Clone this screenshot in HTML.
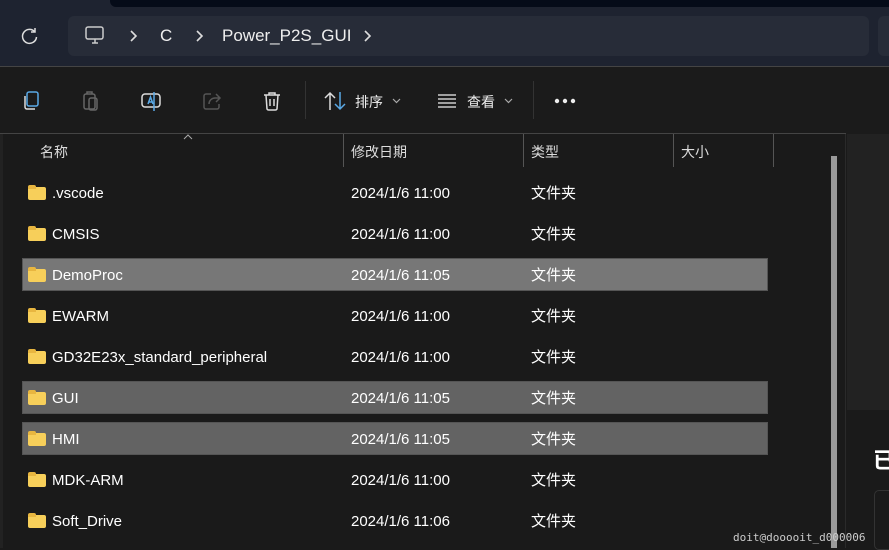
<!DOCTYPE html>
<html><head><meta charset="utf-8"><style>
*{margin:0;padding:0;box-sizing:border-box}
body{width:889px;height:548px;overflow:hidden;background:#1a1a1a;font-family:"Liberation Sans","Noto Sans CJK SC",sans-serif;color:#fff;position:relative}
.a{position:absolute}
.row{position:absolute;left:22px;width:746px;height:33px;font-size:15px;color:#fff}
.row span{position:absolute;top:1px;line-height:33px;height:33px}
.fold{position:absolute;left:6px;top:11px;width:18px;height:13px;background:#f7cf5a;border-radius:2px}
.fold:before{content:"";position:absolute;left:0;top:-2px;width:8px;height:4px;background:#e8b640;border-radius:2px 2px 0 0}
.hd{position:absolute;top:136px;line-height:33px;font-size:14px;color:#ddd}
.vl{position:absolute;top:134px;width:1px;height:33px;background:#555}
.sel{box-shadow:inset 0 0 0 1px #555}
</style></head><body>
<div class="a" style="left:0;top:0;width:889px;height:66px;background:#1e2330"></div>
<div class="a" style="left:110px;top:0;width:779px;height:7px;background:#050b18;border-radius:0 0 0 6px"></div>
<div class="a" style="left:68px;top:16px;width:801px;height:40px;background:#272c38;border-radius:6px"></div>
<div class="a" style="left:878px;top:16px;width:20px;height:40px;background:#272c38;border-radius:6px"></div>
<svg class="a" style="left:20px;top:26px" width="20" height="20" viewBox="0 0 20 20" fill="none" stroke="#ddd" stroke-width="1.5"><path d="M15 6A7 7 0 1 0 16.5 11"/><path d="M15 2v4h-4"/></svg>
<svg class="a" style="left:84px;top:24px" width="22" height="22" viewBox="0 0 22 22" fill="none" stroke="#ccc" stroke-width="1.5"><rect x="2" y="3" width="17" height="12" rx="2"/><path d="M8 19h6M11 15v4"/></svg>
<svg class="a" style="left:128px;top:30px" width="10" height="12" viewBox="0 0 10 12" fill="none" stroke="#ddd" stroke-width="1.6"><path d="M3 1l5 5-5 5"/></svg>
<div class="a" style="left:160px;top:26px;font-size:17px;color:#eee">C</div>
<svg class="a" style="left:194px;top:30px" width="10" height="12" viewBox="0 0 10 12" fill="none" stroke="#ddd" stroke-width="1.6"><path d="M3 1l5 5-5 5"/></svg>
<div class="a" style="left:222px;top:26px;font-size:17px;color:#eee">Power_P2S_GUI</div>
<svg class="a" style="left:362px;top:30px" width="10" height="12" viewBox="0 0 10 12" fill="none" stroke="#ddd" stroke-width="1.6"><path d="M3 1l5 5-5 5"/></svg>
<div class="a" style="left:0;top:66px;width:889px;height:1px;background:#444"></div>
<div class="a" style="left:0;top:67px;width:889px;height:67px;background:#1b1b1b"></div>
<svg class="a" style="left:20px;top:90px" width="22" height="22" viewBox="0 0 22 22" fill="none" stroke-width="1.5"><rect x="7" y="2" width="11" height="14" rx="2" stroke="#5aa9e6"/><path d="M5 6v11a2 2 0 0 0 2 2h8" stroke="#ddd"/></svg>
<svg class="a" style="left:80px;top:90px" width="22" height="22" viewBox="0 0 22 22" fill="none" stroke="#666" stroke-width="1.5"><rect x="4" y="4" width="11" height="15" rx="2"/><rect x="9" y="8" width="8" height="12" rx="2"/><path d="M7 4V2h5v2"/></svg>
<svg class="a" style="left:140px;top:90px" width="22" height="22" viewBox="0 0 22 22" fill="none" stroke-width="1.5"><rect x="2" y="4" width="18" height="13" rx="3" stroke="#ddd"/><path d="M8 14l2.5-7 2.5 7M9 12h3" stroke="#5aa9e6"/><path d="M14 2v19" stroke="#5aa9e6"/></svg>
<svg class="a" style="left:201px;top:90px" width="22" height="22" viewBox="0 0 22 22" fill="none" stroke="#555" stroke-width="1.5"><path d="M15 4l4 4-4 4M19 8h-5a6 6 0 0 0-6 6"/><path d="M10 4H5a2 2 0 0 0-2 2v11a2 2 0 0 0 2 2h11a2 2 0 0 0 2-2v-3"/></svg>
<svg class="a" style="left:261px;top:90px" width="22" height="22" viewBox="0 0 22 22" fill="none" stroke="#ddd" stroke-width="1.5"><path d="M3 5h16M8 5V3h6v2M5 5l1 14a2 2 0 0 0 2 1h6a2 2 0 0 0 2-1l1-14M9 9v7M13 9v7"/></svg>
<div class="a" style="left:305px;top:81px;width:1px;height:38px;background:#333"></div>
<svg class="a" style="left:323px;top:90px" width="24" height="22" viewBox="0 0 24 22" fill="none" stroke-width="1.5"><path d="M7 20V3M2 8l5-5 5 5" stroke="#ddd"/><path d="M17 2v17M12 14l5 5 5-5" stroke="#5aa9e6"/></svg>
<div class="a" style="left:355px;top:92px;font-size:14px;color:#eee">排序</div>
<svg class="a" style="left:392px;top:98px" width="9" height="6" viewBox="0 0 9 6" fill="none" stroke="#aaa" stroke-width="1.2"><path d="M1 1l3.5 3.5L8 1"/></svg>
<svg class="a" style="left:437px;top:93px" width="20" height="16" viewBox="0 0 20 16" stroke="#ccc" stroke-width="1.5"><path d="M1 2h18M1 6h18M1 10h18M1 14h18"/></svg>
<div class="a" style="left:467px;top:92px;font-size:14px;color:#eee">查看</div>
<svg class="a" style="left:504px;top:98px" width="9" height="6" viewBox="0 0 9 6" fill="none" stroke="#aaa" stroke-width="1.2"><path d="M1 1l3.5 3.5L8 1"/></svg>
<div class="a" style="left:533px;top:81px;width:1px;height:38px;background:#333"></div>
<svg class="a" style="left:554px;top:98px" width="22" height="6" viewBox="0 0 22 6" fill="#eee"><circle cx="3" cy="3" r="2.2"/><circle cx="11" cy="3" r="2.2"/><circle cx="19" cy="3" r="2.2"/></svg>
<div class="a" style="left:0;top:133px;width:846px;height:1px;background:#444"></div>
<div class="a" style="left:0;top:134px;width:3px;height:414px;background:#222"></div>
<svg class="a" style="left:183px;top:134px" width="10" height="6" viewBox="0 0 10 6" fill="none" stroke="#aaa" stroke-width="1"><path d="M1 5l4-4 4 4"/></svg>
<div class="hd" style="left:40px">名称</div>
<div class="vl" style="left:343px"></div><div class="hd" style="left:351px">修改日期</div>
<div class="vl" style="left:523px"></div><div class="hd" style="left:531px">类型</div>
<div class="vl" style="left:673px"></div><div class="hd" style="left:681px">大小</div>
<div class="vl" style="left:773px"></div>
<div class="row" style="top:176px"><i class="fold"></i><span style="left:30px">.vscode</span><span style="left:329px">2024/1/6 11:00</span><span style="left:509px">文件夹</span></div>
<div class="row" style="top:217px"><i class="fold"></i><span style="left:30px">CMSIS</span><span style="left:329px">2024/1/6 11:00</span><span style="left:509px">文件夹</span></div>
<div class="row sel" style="top:258px;background:#777"><i class="fold"></i><span style="left:30px">DemoProc</span><span style="left:329px">2024/1/6 11:05</span><span style="left:509px">文件夹</span></div>
<div class="row" style="top:299px"><i class="fold"></i><span style="left:30px">EWARM</span><span style="left:329px">2024/1/6 11:00</span><span style="left:509px">文件夹</span></div>
<div class="row" style="top:340px"><i class="fold"></i><span style="left:30px">GD32E23x_standard_peripheral</span><span style="left:329px">2024/1/6 11:00</span><span style="left:509px">文件夹</span></div>
<div class="row sel" style="top:381px;background:#636363"><i class="fold"></i><span style="left:30px">GUI</span><span style="left:329px">2024/1/6 11:05</span><span style="left:509px">文件夹</span></div>
<div class="row sel" style="top:422px;background:#636363"><i class="fold"></i><span style="left:30px">HMI</span><span style="left:329px">2024/1/6 11:05</span><span style="left:509px">文件夹</span></div>
<div class="row" style="top:463px"><i class="fold"></i><span style="left:30px">MDK-ARM</span><span style="left:329px">2024/1/6 11:00</span><span style="left:509px">文件夹</span></div>
<div class="row" style="top:504px"><i class="fold"></i><span style="left:30px">Soft_Drive</span><span style="left:329px">2024/1/6 11:06</span><span style="left:509px">文件夹</span></div>
<div class="a" style="left:831px;top:156px;width:6px;height:392px;background:#9a9a9a"></div>
<div class="a" style="left:845px;top:134px;width:1px;height:414px;background:#2a2a2a"></div>
<div class="a" style="left:847px;top:134px;width:42px;height:276px;background:#222"></div>
<div class="a" style="left:873px;top:443px;font-size:22px;font-weight:bold;color:#fff">已</div>
<div class="a" style="left:874px;top:490px;width:30px;height:60px;border:1px solid #333;border-radius:5px"></div>
<div class="a" style="left:733px;top:531px;font-family:'DejaVu Sans Mono',monospace;font-size:11px;color:#ccc">doit@dooooit_d000006</div>
</body></html>
